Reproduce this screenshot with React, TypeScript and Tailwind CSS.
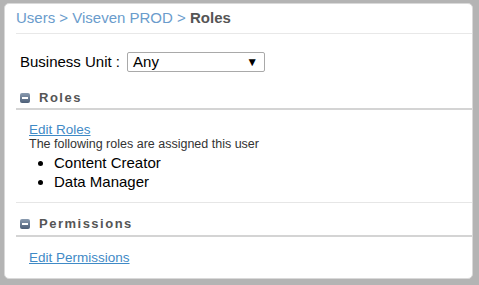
import React from "react";

function MinusBox() {
  return (
    <svg width="10" height="10" viewBox="0 0 10 10" className="shrink-0">
      <defs>
        <linearGradient id="g" x1="0" y1="0" x2="0" y2="1">
          <stop offset="0" stopColor="#8a9bb0" />
          <stop offset="1" stopColor="#4d5f78" />
        </linearGradient>
      </defs>
      <rect x="0" y="0" width="10" height="10" rx="2" fill="url(#g)" />
      <rect x="2" y="4" width="6" height="2" fill="#ffffff" />
    </svg>
  );
}

export default function App() {
  return (
    <div
      className="w-[479px] h-[285px] bg-[#b4b4b4] pt-[3px] pl-[4px] pr-[6px] pb-[6px]"
      style={{ fontFamily: '"Liberation Sans", Arial, sans-serif' }}
    >
      <div className="w-full h-full bg-white rounded-[5px] border border-[#d9d9d9] pl-[11px]">
        <div className="h-[30px] pt-[5px] border-b border-[#e8e8e8] text-[15px] leading-[17px]">
          <span className="text-[#6a9ccc]">Users &gt; Viseven PROD &gt; </span>
          <span className="text-[#555] font-bold">Roles</span>
        </div>
        <div className="pl-[4px] mt-[18px] flex items-center h-[20px]">
          <span className="text-[15px] text-black mr-[7px]">Business Unit :</span>
          <div className="w-[138px] h-[20px] border border-[#a9a9a9] rounded-[2px] flex items-center justify-between pl-[5px] pr-[6px] text-[15px] text-black">
            <span>Any</span>
            <span className="text-[12px] leading-none">▼</span>
          </div>
        </div>
        <div className="flex items-center gap-[9px] pl-[4px] h-[16px] mt-[18px] border-b-2 border-[#d4d4d4] box-content pb-[2px]">
          <MinusBox />
          <span className="text-[13px] font-bold text-[#555] tracking-[1.5px]">Roles</span>
        </div>
        <div className="pl-[13px] pt-[12px]">
          <a className="text-[13.5px] leading-[15px] text-[#3f8ac6] underline block">Edit Roles</a>
          <div className="text-[12.5px] leading-[14px] text-[#333]">The following roles are assigned this user</div>
          <ul className="list-disc pl-[25px] text-[15px] leading-[19px] text-black mt-[2px]">
            <li>Content Creator</li>
            <li>Data Manager</li>
          </ul>
        </div>
        <div className="border-b border-[#e6e6e6] mt-[11px]" />
        <div className="flex items-center gap-[9px] pl-[4px] h-[16px] mt-[13px] border-b-2 border-[#d4d4d4] box-content pb-[3px]">
          <MinusBox />
          <span className="text-[13px] font-bold text-[#555] tracking-[1.5px]">Permissions</span>
        </div>
        <div className="pl-[13px] pt-[13px]">
          <a className="text-[13.5px] leading-[15px] text-[#3f8ac6] underline block">Edit Permissions</a>
        </div>
      </div>
    </div>
  );
}
